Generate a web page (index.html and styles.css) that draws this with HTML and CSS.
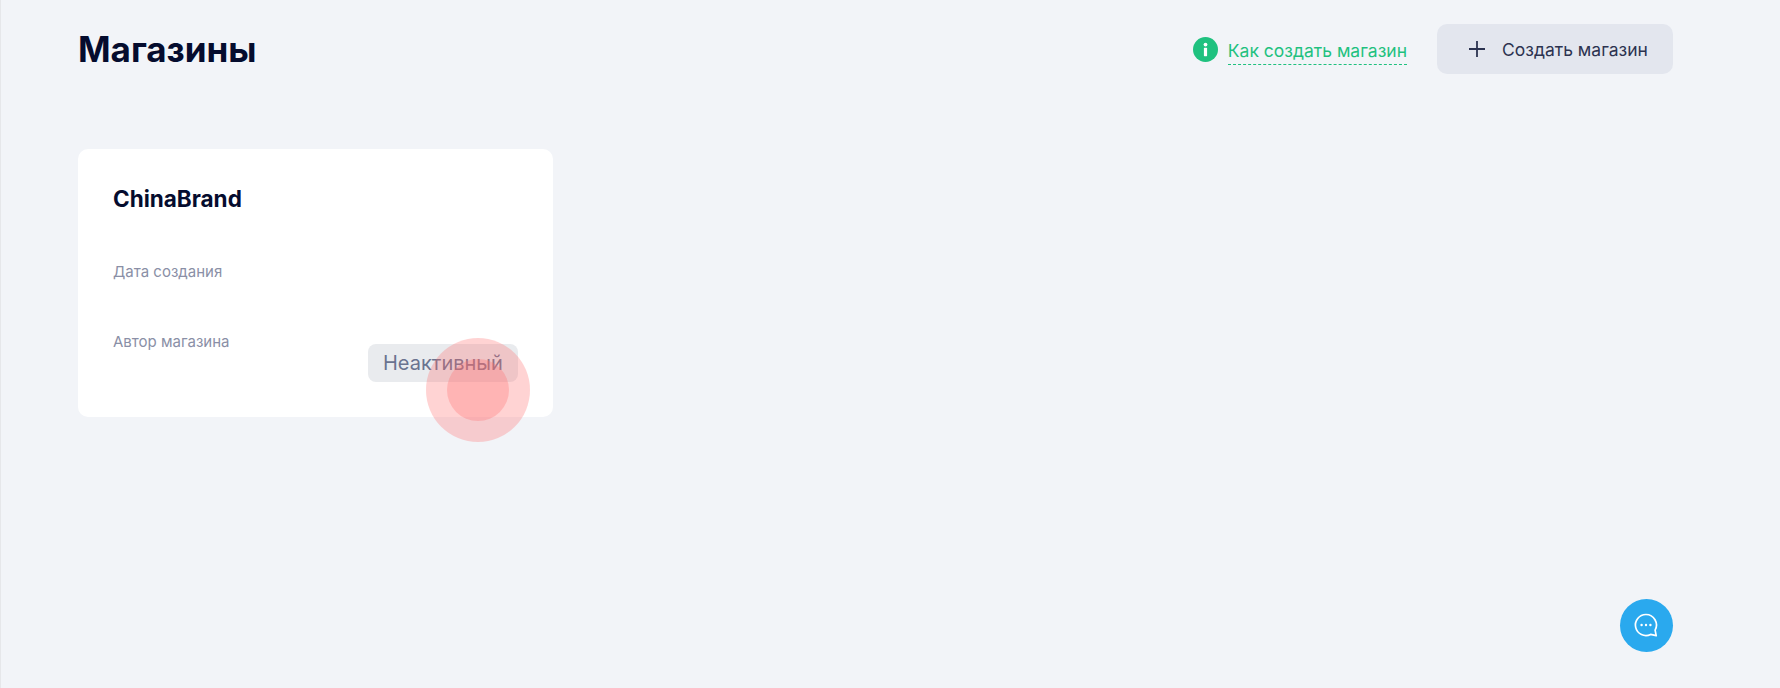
FILE: index.html
```html
<!DOCTYPE html>
<html lang="ru">
<head>
    <meta charset="UTF-8">
    <meta name="viewport" content="width=device-width, initial-scale=1.0">
    <title>Магазины</title>
    <link rel="stylesheet" href="styles.css">
</head>
<body>
    <div class="page">
        <!-- Шапка -->
        <header class="header">
            <h1 class="title">Магазины</h1>
            <div class="actions">
                <div class="help">
                    <svg class="help-icon" viewBox="0 0 25 25" aria-hidden="true">
                        <circle cx="12.5" cy="12.5" r="12.5" fill="#1fc17f"/>
                        <circle cx="12.5" cy="7.6" r="1.9" fill="#fff"/>
                        <rect x="10.9" y="10.8" width="3.2" height="8.4" rx="0.6" fill="#fff"/>
                    </svg>
                    <a href="#" class="help-link">Как создать магазин</a>
                </div>
                <button type="button" class="button">
                    <svg class="button-icon" viewBox="0 0 18 18" aria-hidden="true">
                        <path d="M9 1v16M1 9h16" stroke="#2c3350" stroke-width="1.8" fill="none"/>
                    </svg>
                    Создать магазин
                </button>
            </div>
        </header>

        <!-- Список магазинов -->
        <main class="shops">
            <article class="card">
                <h2 class="card-name">ChinaBrand</h2>
                <p class="card-label card-date">Дата создания</p>
                <div class="card-row">
                    <p class="card-label">Автор магазина</p>
                    <span class="badge">Неактивный</span>
                </div>
                <!-- Отметка клика -->
                <div class="click-mark"><div class="click-mark-core"></div></div>
            </article>
        </main>

        <button type="button" class="chat" aria-label="Чат">
            <svg viewBox="0 0 26 26" class="chat-icon" aria-hidden="true">
                <path d="M13 2.5a10.5 10.5 0 1 0 4.6 19.9l5.6 1.3-1.1-5.6A10.5 10.5 0 0 0 13 2.5z" fill="none" stroke="#fff" stroke-width="1.7" stroke-linejoin="round"/>
                <circle cx="8.6" cy="13" r="1.2" fill="#fff"/>
                <circle cx="13" cy="13" r="1.2" fill="#fff"/>
                <circle cx="17.4" cy="13" r="1.2" fill="#fff"/>
            </svg>
        </button>
    </div>
</body>
</html>
```

FILE: styles.css
```css
* {
    box-sizing: border-box;
}
html,
body {
    height: 100%;
}
body {
    margin: 0;
    font-family: Inter, "Noto Sans", sans-serif;
    background-color: #f2f4f8;
    border-left: 1px solid #e6e7ea;
    overflow: hidden;
}
.page {
    position: relative;
    height: 100%;
    padding: 24px 107px 0 77px;
}
.header {
    display: flex;
    justify-content: space-between;
    align-items: flex-start;
}
.title {
    margin: 0;
    font-size: 35px;
    line-height: 50px;
    font-weight: 700;
    color: #050c2e;
}
.actions {
    display: flex;
    align-items: center;
    gap: 30px;
}
.help {
    display: flex;
    align-items: center;
    gap: 10px;
}
.help-icon {
    width: 25px;
    height: 25px;
}
.help-link {
    font-size: 17.5px;
    line-height: 27px;
    color: #1fc17f;
    text-decoration: none;
    border-bottom: 1px dashed #1fc17f;
    margin-top: 4px;
}
.button {
    display: flex;
    align-items: center;
    gap: 16px;
    width: 236px;
    height: 50px;
    padding: 0 0 0 31px;
    font-family: inherit;
    font-size: 17.5px;
    color: #2c3350;
    background-color: #e3e6ee;
    border: none;
    border-radius: 10px;
    cursor: pointer;
}
.button-icon {
    width: 18px;
    height: 18px;
}
.shops {
    margin-top: 75px;
}
.card {
    position: relative;
    width: 475px;
    height: 268px;
    padding: 35px 34px 0 35px;
    background: white;
    border-radius: 10px;
}
.card-name {
    margin: 0;
    font-size: 22.5px;
    line-height: 30px;
    font-weight: 700;
    color: #050c2e;
}
.card-label {
    margin: 0;
    font-size: 15px;
    line-height: 20px;
    color: #8a8fa6;
}
.card-date {
    margin-top: 48px;
}
.card-row {
    display: flex;
    justify-content: space-between;
    align-items: flex-start;
    margin-top: 50px;
}
.badge {
    margin-top: 12px;
    margin-right: 1px;
    padding: 0 15px;
    height: 38px;
    width: 150px;
    font-size: 20px;
    line-height: 38px;
    white-space: nowrap;
    color: #6a7390;
    background-color: #e9ebee;
    border-radius: 8px;
}
.click-mark {
    position: absolute;
    left: 348px;
    top: 189px;
    width: 104px;
    height: 104px;
    display: flex;
    justify-content: center;
    align-items: center;
    background: rgba(255, 110, 110, 0.3);
    border-radius: 50%;
}
.click-mark-core {
    width: 62px;
    height: 62px;
    background: rgba(255, 110, 110, 0.3);
    border-radius: 50%;
}
.chat {
    position: absolute;
    right: 107px;
    bottom: 36px;
    display: flex;
    justify-content: center;
    align-items: center;
    width: 53px;
    height: 53px;
    padding: 0 2px 2px 0;
    background-color: #2aa9ee;
    border: none;
    border-radius: 50%;
    cursor: pointer;
}
.chat-icon {
    width: 26px;
    height: 26px;
}
```
